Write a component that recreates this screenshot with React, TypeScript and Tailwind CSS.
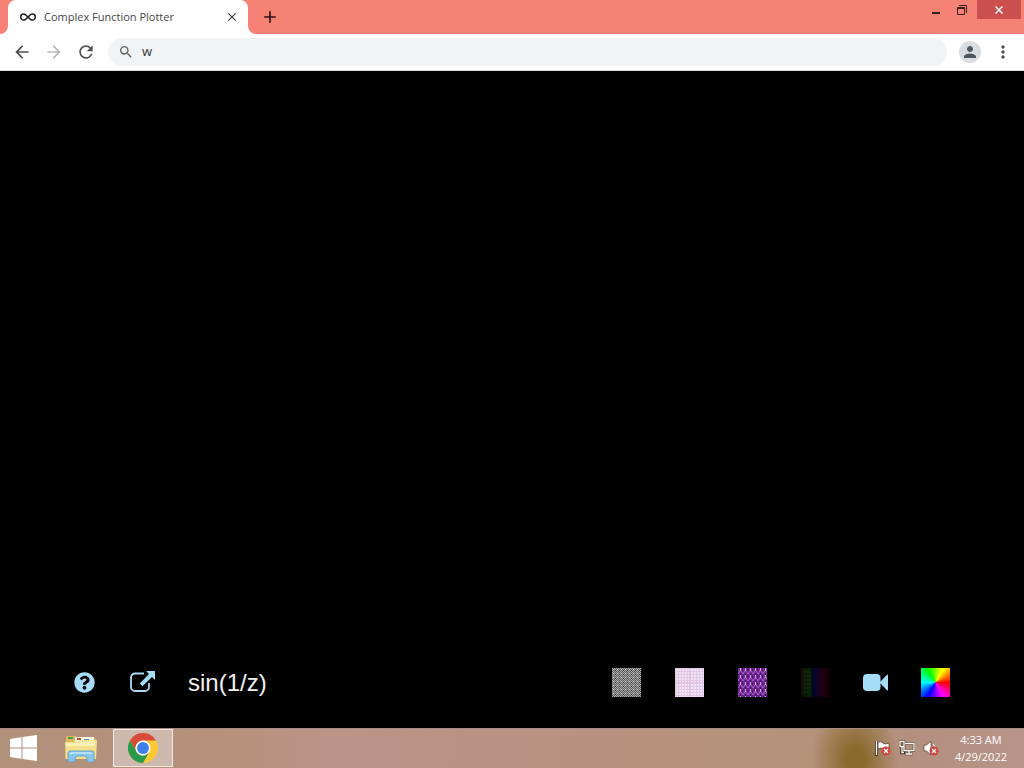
import { useState } from 'react';
import type { ReactNode } from 'react';
import { FaQuestionCircle } from 'react-icons/fa';
import {
  MdAdd,
  MdArrowBack,
  MdArrowForward,
  MdClose,
  MdMoreVert,
  MdPerson,
  MdRefresh,
  MdSearch,
} from 'react-icons/md';

interface IconButtonProps {
  label: string;
  className?: string;
  children?: ReactNode;
}

const IconButton = ({ label, className = '', children }: IconButtonProps) => (
  <button
    type="button"
    aria-label={label}
    className={`flex shrink-0 items-center justify-center ${className}`}
  >
    {children}
  </button>
);

const InfinityIcon = () => (
  <svg viewBox="0 0 16 10" className="h-[10px] w-4" fill="none" stroke="#1a1a1a" strokeWidth="1.5">
    <path d="M9.800 3.200C10.500 2.400 11.200 1.900 12.200 1.900a3.100 3.100 0 0 1 0 6.200C9.500 8.100 6.500 1.900 3.800 1.900a3.100 3.100 0 0 0 0 6.200C4.800 8.100 5.500 7.600 6.200 6.800M6.200 6.800L9.800 3.200" />
  </svg>
);

const ExternalIcon = () => (
  <svg viewBox="0 0 26 23" className="h-[23px] w-[26px]" fill="none">
    <path
      d="M14 2.500H5a4 4 0 0 0-4 4V16a4 4 0 0 0 4 4h10a4 4 0 0 0 4-4v-4"
      stroke="#a5dcf8"
      strokeWidth="1.800"
    />
    <path d="M16 0H25v9l-3-3L12.500 15.300 9.700 12.500 19 3z" fill="#a5dcf8" />
  </svg>
);

const CameraIcon = () => (
  <svg viewBox="0 0 25 17" className="h-[17px] w-[25px]" fill="#a5dcf8">
    <rect width="17.500" height="17" rx="4" />
    <path d="M16.500 8.500L24 .7q1-.6 1 .4v14.800q0 1-1 .4z" />
  </svg>
);

const CheckerTile = () => (
  <svg viewBox="0 0 29 29" className="size-[29px]" shapeRendering="crispEdges">
    <defs>
      <pattern id="checker" width="2" height="2" patternUnits="userSpaceOnUse">
        <path d="M0 0h1v1H0zM1 1h1v1H1z" fill="#a8a8a8" />
      </pattern>
      <pattern id="checkerDots" width="4" height="4" patternUnits="userSpaceOnUse">
        <path d="M1 1h1v1H1z" fill="#dcdcdc" />
        <path d="M3 2h1v1H3z" fill="#3a3a3a" />
      </pattern>
    </defs>
    <rect width="29" height="29" fill="#5c5c5c" />
    <rect width="29" height="29" fill="url(#checker)" />
    <rect width="29" height="29" fill="url(#checkerDots)" />
  </svg>
);

const GridTile = () => (
  <svg viewBox="0 0 29 29" className="size-[29px]" shapeRendering="crispEdges">
    <defs>
      <linearGradient id="gridBase">
        <stop offset="0" stopColor="#f3e0ee" />
        <stop offset="0.5" stopColor="#f4e4f5" />
        <stop offset="1" stopColor="#eee1f8" />
      </linearGradient>
      <pattern id="gridLines" width="3" height="3" patternUnits="userSpaceOnUse">
        <path d="M0 0h3v1H0zM0 1h1v2H0z" fill="#c9a0cf" fillOpacity="0.4" />
      </pattern>
    </defs>
    <rect width="29" height="29" fill="url(#gridBase)" />
    <rect width="29" height="29" fill="url(#gridLines)" />
    <path d="M14 0v29M0 14h29" stroke="#d6a5cf" strokeOpacity="0.5" />
  </svg>
);

const WeaveTile = () => (
  <svg viewBox="0 0 29 29" className="size-[29px]">
    <defs>
      <pattern id="weave" width="5" height="7" patternUnits="userSpaceOnUse">
        <rect width="5" height="7" fill="#6b2490" />
        <path d="M0 6L2.500 2 5 6" stroke="#a95dc6" fill="none" />
        <path d="M2 0h1v3H2z" fill="#dba2e2" />
        <path d="M2 5h1v2H2zM4 1h1v2H4z" fill="#3f1460" />
      </pattern>
    </defs>
    <rect width="29" height="29" fill="url(#weave)" />
  </svg>
);

const DarkTile = () => (
  <svg viewBox="0 0 29 29" className="size-[29px]">
    <defs>
      <linearGradient id="darkBase">
        <stop offset="0" stopColor="#160a00" />
        <stop offset="0.3" stopColor="#03200b" />
        <stop offset="0.42" stopColor="#000818" />
        <stop offset="0.47" stopColor="#07003a" />
        <stop offset="0.6" stopColor="#17001c" />
        <stop offset="0.85" stopColor="#1d0008" />
        <stop offset="1" stopColor="#080003" />
      </linearGradient>
    </defs>
    <rect width="29" height="29" fill="url(#darkBase)" />
    <path d="M2 4h9M2 8h9M2 12h9M2 16h9M2 20h9M2 24h7" stroke="#3a2208" strokeDasharray="2 1" />
    <path d="M4 1v28M8 1v28" stroke="#052c10" />
  </svg>
);

const WindowsIcon = () => (
  <svg viewBox="0 0 28 26" className="h-[26px] w-7" fill="#fff">
    <path d="M0 4L11.500 2.200V12.500H0zM12.500 2L27 0v12.500H12.500zM0 13.500h11.500v10.300L0 22zM12.500 13.500H27V26l-14.500-2z" />
  </svg>
);

const ExplorerIcon = () => (
  <svg viewBox="0 0 34 28" className="h-7 w-[34px]">
    <path d="M2 4q0-2 2-2h7l2 2h17q2 0 2 2v19H1z" fill="#dfb95c" />
    <path d="M4 3h5v2H4z" fill="#3b9d55" />
    <path d="M11 3h19v6H11z" fill="#fff6e0" />
    <path d="M13 4h4v2h-4z" fill="#c44a3a" />
    <path d="M20 5h5v2h-5z" fill="#5397cf" />
    <path d="M1 8h13l2-2h16q1 0 1 1l-1 18H2z" fill="#f4df8c" />
    <path d="M2 9h12l2-2h15v5H2z" fill="#fbefb2" />
    <path
      d="M4 28V19q0-2 2-2h22q2 0 2 2v9h-7v-3q0-3-3-3h-6q-3 0-3 3v3z"
      fill="#86c6ec"
      stroke="#4e9ccd"
      strokeWidth="0.8"
    />
    <path d="M6 20q1-1 3-1h16q2 0 3 1" fill="none" stroke="#c5e9fa" strokeWidth="1.500" />
  </svg>
);

const ChromeIcon = () => (
  <svg viewBox="0 0 48 48" className="size-[30px]">
    <circle cx="24" cy="24" r="24" fill="#fbc934" />
    <path d="M3.200 12A24 24 0 0 1 44.800 12H24A12 12 0 0 0 13.600 30z" fill="#d84a3a" />
    <path d="M3.200 12A24 24 0 0 0 24 48L34.400 30A12 12 0 0 1 13.600 30z" fill="#2a9a4b" />
    <circle cx="24" cy="24" r="12" fill="#fff" />
    <circle cx="24" cy="24" r="9.500" fill="#3f7fe8" />
  </svg>
);

const ErrorMark = () => (
  <>
    <circle cx="11" cy="11" r="4.500" fill="#d4423f" />
    <path d="M9 9l4 4M13 9l-4 4" stroke="#fff" strokeWidth="1.300" />
  </>
);

const FlagIcon = () => (
  <svg viewBox="0 0 16 16" className="size-4">
    <path d="M1.500 1v15" stroke="#4a3527" strokeWidth="3" />
    <path d="M3 2q3-1 5 1t6 0v7q-3 1-5-1t-6 0z" fill="#fff" stroke="#4a3527" strokeWidth="0.7" />
    <path d="M1.500 1v14" stroke="#fff" strokeWidth="1.300" />
    <ErrorMark />
  </svg>
);

const NetworkIcon = () => (
  <svg viewBox="0 0 16 16" className="size-4" fill="none">
    <path d="M5 3.500h10v7H5zM10 11v3M6 14h8M2.500 6v7h4" stroke="#4a3527" strokeWidth="2.600" />
    <rect x="1" y="1.500" width="4" height="5" fill="#8d6a50" stroke="#4a3527" strokeWidth="2.400" />
    <path d="M6 3.500h9v7H5V7M10 11v3M6.500 14h7M3 6.500V12.500h2" stroke="#fff" strokeWidth="1.300" />
    <rect x="1" y="1.500" width="4" height="5" stroke="#fff" strokeWidth="1.300" />
  </svg>
);

const SpeakerIcon = () => (
  <svg viewBox="0 0 16 16" className="size-4">
    <path d="M1 5h2.500L8 1v14l-4.500-4H1z" fill="#fff" stroke="#4a3527" strokeWidth="0.7" />
    <path d="M10 4q2 2 2 4" fill="none" stroke="#fff" />
    <ErrorMark />
  </svg>
);

const tiles = [
  { label: 'Checkerboard', icon: <CheckerTile /> },
  { label: 'Grid', icon: <GridTile /> },
  { label: 'Weave', icon: <WeaveTile /> },
  { label: 'Dark', icon: <DarkTile /> },
];

const BrowserHeader = () => {
  const [address, setAddress] = useState('w');

  return (
    <header className="shrink-0 bg-white">
      <div className="flex h-[34px]">
        <div className="w-2 shrink-0 rounded-br-lg bg-[#f68276]" />
        <div className="flex w-60 shrink-0 bg-[linear-gradient(#f68276_50%,white_50%)]">
          <div className="flex flex-1 items-center rounded-t-lg bg-white pr-2 pl-3">
            <InfinityIcon />
            <span className="ml-2 flex-1 whitespace-nowrap text-[11px] text-[#45474a]">
              Complex Function Plotter
            </span>
            <IconButton label="Close tab" className="size-4">
              <MdClose className="size-[14px] text-[#3c4043]" />
            </IconButton>
          </div>
        </div>
        <div className="flex flex-1 items-start justify-between rounded-bl-lg bg-[#f68276]">
          <IconButton label="New tab" className="ml-3 h-[34px] w-5">
            <MdAdd className="size-5 text-[#2b1917]" />
          </IconButton>
          <div className="flex h-[19px] pr-[3px]">
            <IconButton label="Minimize" className="w-[26px]">
              <svg viewBox="0 0 10 10" className="size-[10px]">
                <path d="M1 7h8v2H1z" fill="#35201b" />
              </svg>
            </IconButton>
            <IconButton label="Restore" className="mr-[2px] w-[26px]">
              <svg viewBox="0 0 10 10" className="size-[10px]" fill="none" stroke="#35201b">
                <path d="M2 .5h7.500V8" />
                <path d="M.5 2.500h7v7h-7z" />
                <path d="M0 3.500h8" />
              </svg>
            </IconButton>
            <IconButton label="Close" className="w-11 bg-[#cc4f50]">
              <svg viewBox="0 0 8 8" className="size-2" stroke="#fff" strokeWidth="1.500">
                <path d="M.5.5l7 7M7.500.5l-7 7" />
              </svg>
            </IconButton>
          </div>
        </div>
      </div>
      <div className="flex h-[37px] items-center border-b border-[#d9dcdf] pr-[11px] pl-3">
        <IconButton label="Back" className="mr-3 size-5">
          <MdArrowBack className="size-5 text-[#4d5054]" />
        </IconButton>
        <IconButton label="Forward" className="mr-3 size-5">
          <MdArrowForward className="size-5 text-[#b5b7b9]" />
        </IconButton>
        <IconButton label="Reload" className="mr-3 size-5">
          <MdRefresh className="size-5 text-[#4d5054]" />
        </IconButton>
        <label className="flex h-7 flex-1 items-center rounded-full bg-[#f1f3f4] pl-[10px]">
          <MdSearch className="size-4 text-[#5f6368]" />
          <input
            aria-label="Address"
            value={address}
            onChange={(e) => setAddress(e.target.value)}
            className="ml-2 flex-1 bg-transparent text-[13px] text-[#333639] outline-none"
          />
        </label>
        <IconButton label="Profile" className="ml-3 size-[22px] rounded-full bg-[#d9dde2]">
          <MdPerson className="size-[18px] text-[#4b5661]" />
        </IconButton>
        <IconButton label="Menu" className="ml-3 size-5">
          <MdMoreVert className="size-5 text-[#4d5054]" />
        </IconButton>
      </div>
    </header>
  );
};

const Plotter = () => {
  const [formula, setFormula] = useState('sin(1/z)');

  return (
    <main className="flex flex-1 flex-col justify-end bg-black">
      <div className="mb-[30px] flex h-[31px] items-center pr-[74px] pl-[74px]">
        <IconButton label="Help" className="mr-[35px]">
          <FaQuestionCircle className="size-[21px] text-[#a5dcf8]" />
        </IconButton>
        <IconButton label="Open in new window" className="mr-8">
          <ExternalIcon />
        </IconButton>
        <input
          aria-label="Function"
          value={formula}
          onChange={(e) => setFormula(e.target.value)}
          className="min-w-0 flex-1 bg-transparent font-['Liberation_Sans',Arial,sans-serif] text-2xl leading-[31px] text-[#f2f2f2] outline-none"
        />
        <div className="flex items-center gap-[33px]">
          <div className="flex items-center gap-[34px]">
            {tiles.map((tile) => (
              <IconButton key={tile.label} label={tile.label}>
                {tile.icon}
              </IconButton>
            ))}
          </div>
          <IconButton label="Record video">
            <CameraIcon />
          </IconButton>
          <IconButton
            label="Color wheel"
            className="size-[29px] bg-[conic-gradient(from_90deg,red,magenta,blue,cyan,lime,yellow,red)]"
          />
        </div>
      </div>
    </main>
  );
};

const Taskbar = () => (
  <footer className="flex h-10 shrink-0 items-center bg-[radial-gradient(ellipse_44px_60px_at_83.5%_80%,#8a6a2e_20%,transparent_100%),linear-gradient(90deg,#b0917c_0%,#b6917b_22%,#ba9588_32%,#b79280_60%,#b5937a_77%,#b39080_92%,#b8948a_100%)] pr-[17px] pl-[10px] shadow-[inset_0_1px_#a98c86]">
    <IconButton label="Start" className="mr-[26px]">
      <WindowsIcon />
    </IconButton>
    <IconButton label="File Explorer" className="mr-[15px]">
      <ExplorerIcon />
    </IconButton>
    <IconButton
      label="Google Chrome"
      className="h-[38px] w-[60px] border border-[#f3e9e4] bg-[#cdb9ad]"
    >
      <ChromeIcon />
    </IconButton>
    <div className="ml-auto flex items-center gap-2">
      <IconButton label="Action Center">
        <FlagIcon />
      </IconButton>
      <IconButton label="Network">
        <NetworkIcon />
      </IconButton>
      <IconButton label="Volume">
        <SpeakerIcon />
      </IconButton>
      <time className="ml-2 text-center text-[11px] leading-[17px] text-white">
        4:33 AM
        <br />
        4/29/2022
      </time>
    </div>
  </footer>
);

const App = () => (
  <div className="flex h-screen flex-col overflow-hidden font-['Segoe_UI','Open_Sans',sans-serif]">
    <BrowserHeader />
    <Plotter />
    <Taskbar />
  </div>
);

export default App;
